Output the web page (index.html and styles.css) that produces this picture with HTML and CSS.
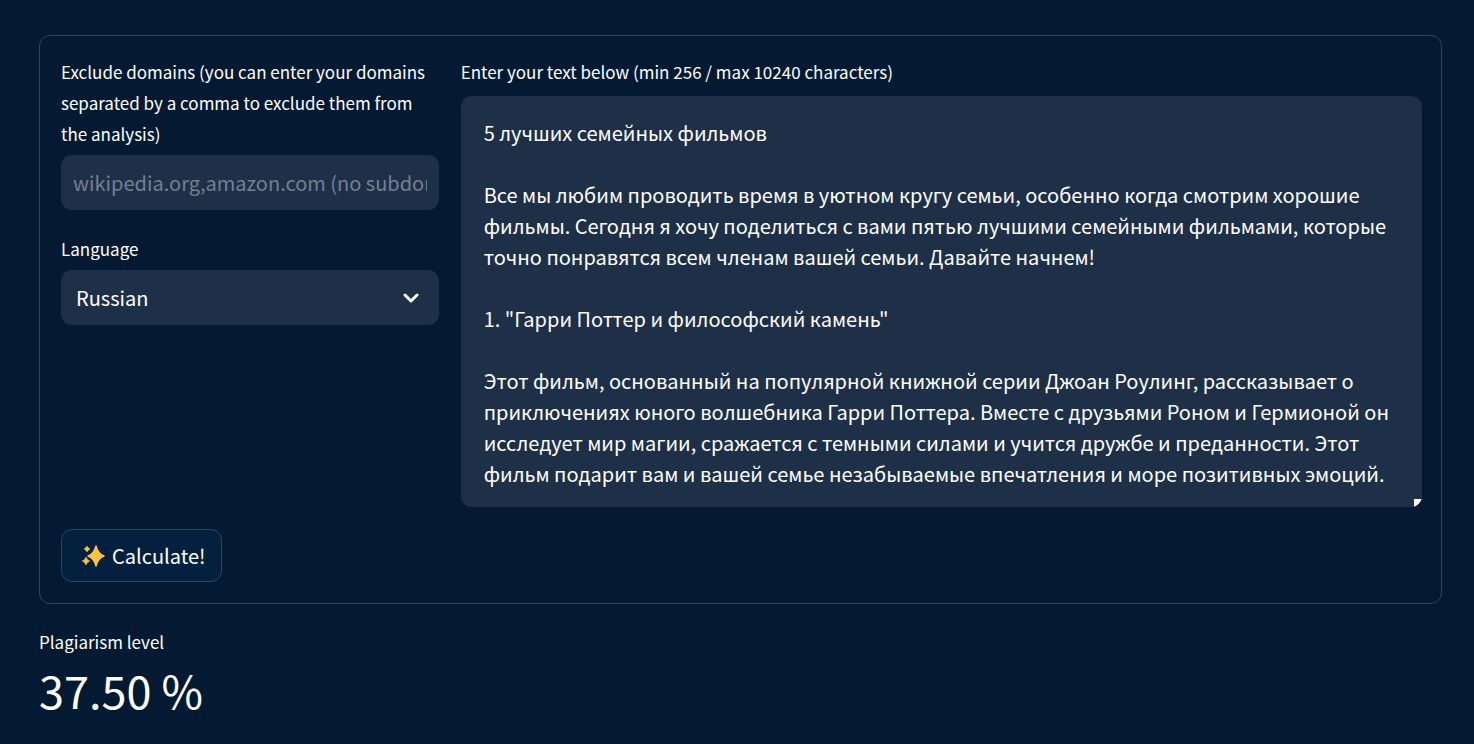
FILE: index.html
```html
<!DOCTYPE html>
<html lang="en">
<head>
	<meta charset="UTF-8">
	<meta name="viewport" content="width=device-width, initial-scale=1.0">
	<title>Plagiarism checker</title>
	<link rel="stylesheet" href="styles.css">
</head>
<body>
	<form class="form">
		<div class="columns">
			<div class="options">
				<label for="domains">Exclude domains (you can enter your domains separated by a comma to exclude them from the analysis)</label>
				<input type="text" id="domains" class="field" placeholder="wikipedia.org,amazon.com (no subdomains)">

				<label for="language" class="next">Language</label>
				<div class="select">
					<select id="language" class="field">
						<option>English</option>
						<option selected>Russian</option>
					</select>
					<svg class="arrow" viewBox="0 0 16 10" fill="none"><path d="M2 2l6 6 6-6" stroke="#fff" stroke-width="3" stroke-linecap="round" stroke-linejoin="round"/></svg>
				</div>
			</div>
			<div class="content">
				<label for="text">Enter your text below (min 256 / max 10240 characters)</label>
				<textarea id="text" class="field">
5 лучших семейных фильмов

Все мы любим проводить время в уютном кругу семьи, особенно когда смотрим хорошие фильмы. Сегодня я хочу поделиться с вами пятью лучшими семейными фильмами, которые точно понравятся всем членам вашей семьи. Давайте начнем!

1. "Гарри Поттер и философский камень"

Этот фильм, основанный на популярной книжной серии Джоан Роулинг, рассказывает о приключениях юного волшебника Гарри Поттера. Вместе с друзьями Роном и Гермионой он исследует мир магии, сражается с темными силами и учится дружбе и преданности. Этот фильм подарит вам и вашей семье незабываемые впечатления и море позитивных эмоций.</textarea>
			</div>
		</div>
		<button type="button" class="calculate">
			<svg class="sparkles" viewBox="0 0 24 22" fill="#fdc23e">
				<path d="M15 1Q17 9 23 11Q17 13 15 21Q13 13 7 11Q13 9 15 1Z" stroke="#fdc23e" stroke-width="1.500" stroke-linejoin="round"/>
				<path d="M6 1Q7 3 9 4Q7 5 6 7Q5 5 3 4Q5 3 6 1Z" stroke="#fdc23e" stroke-width=".500"/>
				<path d="M5 12Q6 15 9 16Q6 17 5 20Q4 17 1 16Q4 15 5 12Z" stroke="#fdc23e" stroke-width=".500"/>
			</svg>
			Calculate!
		</button>
	</form>

	<div class="metric">
		<div class="metric-label">Plagiarism level</div>
		<div class="metric-value">37.50 %</div>
	</div>
</body>
</html>
```
FILE: styles.css
```css
* {
	box-sizing: border-box;
}
body {
	margin: 0;
	padding: 35px 32px 20px 39px;
	background-color: #031a32;
	color: #fff;
	font-family: "Noto Sans CJK SC", "Noto Sans", sans-serif;
	font-size: 20px;
	line-height: 31px;
}
.form {
	border: 1px solid #2f455b;
	border-radius: 11px;
	padding: 20px 19px 21px 21px;
}
.columns {
	display: grid;
	grid-template-columns: 11fr 28fr;
	gap: 22px;
	margin-bottom: 22px;
}
.options, .content {
	min-width: 0;
}
label, .metric-label {
	display: block;
	font-size: 17px;
}
label {
	margin-bottom: 6px;
}
.content label {
	margin-bottom: 9px;
}
.next {
	margin-top: 23px;
}
.field {
	display: block;
	width: 100%;
	height: 55px;
	padding: 0 12px;
	border: 0;
	border-radius: 11px;
	outline: none;
	background-color: #1e3047;
	color: #fff;
	font: inherit;
}
.field::placeholder {
	color: #738090;
	opacity: 1;
}
.select {
	display: grid;
	align-items: center;
}
.select .field, .arrow {
	grid-area: 1 / 1;
}
.select .field {
	appearance: none;
	padding: 0 15px;
}
.arrow {
	width: 16px;
	height: 10px;
	margin-right: 20px;
	justify-self: end;
	pointer-events: none;
}
textarea.field {
	height: 411px;
	padding: 21px 23px;
	resize: vertical;
	overflow: hidden;
}
textarea.field::-webkit-resizer {
	background: linear-gradient(135deg, #fff 60%, #555 60%) right bottom / 8px 8px no-repeat;
	border-bottom-right-radius: 11px;
}
.calculate {
	display: flex;
	align-items: center;
	gap: 7px;
	height: 53px;
	padding: 0 16px 0 19px;
	border: 1px solid #2f455b;
	border-radius: 11px;
	background-color: #04203f;
	color: #fff;
	font: inherit;
}
.sparkles {
	width: 24px;
	height: 22px;
}
.metric {
	margin-top: 22px;
}
.metric-value {
	font-size: 45px;
	line-height: 66px;
}
```
